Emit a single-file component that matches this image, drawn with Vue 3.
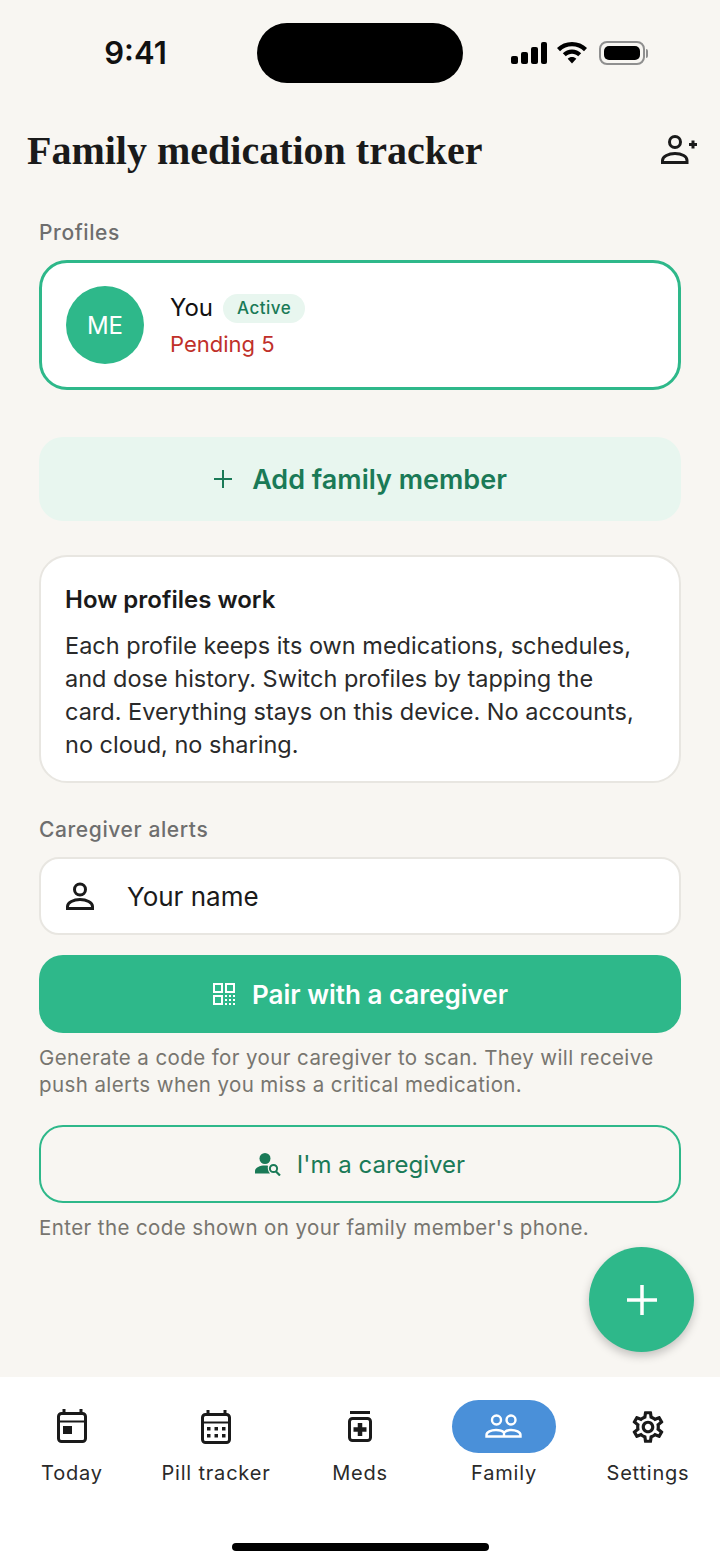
<template>
  <div class="screen">
    <div class="status-bar">
      <span class="time">9:41</span>
      <div class="island"></div>
      <div class="status-icons">
        <svg width="38" height="24" viewBox="0 0 38 24">
          <rect x="1" y="15" width="7" height="8" rx="2" />
          <rect x="11" y="11" width="7" height="12" rx="2" />
          <rect x="21" y="6" width="7" height="17" rx="2" />
          <rect x="31" y="1" width="6" height="22" rx="2" />
        </svg>
        <svg width="32" height="24" viewBox="0 0 32 24">
          <path d="M16 1C10 1 5 3.200 1 7l3 3.200C7.300 7 11.400 5.300 16 5.300S24.700 7 28 10.200L31 7C27 3.200 22 1 16 1z" />
          <path d="M16 8.500c-3.600 0-6.800 1.400-9.200 3.700l3 3.100c1.600-1.500 3.800-2.500 6.200-2.500s4.600 1 6.200 2.500l3-3.100C22.800 9.900 19.600 8.500 16 8.500z" />
          <path d="M16 16c-1.700 0-3.200.7-4.300 1.700L16 22.500l4.300-4.800C19.200 16.700 17.700 16 16 16z" />
        </svg>
        <div class="battery"><span class="battery-fill"></span></div>
        <span class="battery-cap"></span>
      </div>
    </div>

    <header class="page-header">
      <h1>Family medication tracker</h1>
      <svg class="add-person" width="38" height="32" viewBox="0 0 38 32" fill="none" stroke="#1a1a1a" stroke-width="3">
        <circle cx="15" cy="8" r="5.500" />
        <path d="M2.500 28.500v-2c0-4 6-7 12.500-7 3.500 0 6.500.8 8.700 2 2.200 1.200 3.300 3 3.300 5v2z" />
        <path d="M29 10.500h8M33 6.500v8" />
      </svg>
    </header>

    <main class="content">
      <div class="section-label">Profiles</div>
      <div class="profile-card">
        <div class="avatar">ME</div>
        <div class="profile-info">
          <div class="name-row">
            <span class="profile-name">You</span>
            <span class="active-badge">Active</span>
          </div>
          <div class="pending">Pending 5</div>
        </div>
      </div>

      <button class="add-member">
        <svg width="20" height="20" viewBox="0 0 20 20" fill="none" stroke="#1a7a57" stroke-width="2">
          <path d="M1 10h18M10 1v18" />
        </svg>
        <span>Add family member</span>
      </button>

      <div class="info-card">
        <h2>How profiles work</h2>
        <p>Each profile keeps its own medications, schedules, and dose history. Switch profiles by tapping the card. Everything stays on this device. No accounts, no cloud, no sharing.</p>
      </div>

      <div class="section-label alerts-label">Caregiver alerts</div>
      <div class="name-input">
        <svg width="30" height="30" viewBox="0 0 30 30" fill="none" stroke="#1a1a1a" stroke-width="3">
          <circle cx="15" cy="8.500" r="5.500" />
          <path d="M2.500 27.500v-2c0-4 6-7 12.500-7s12.500 3 12.500 7v2z" />
        </svg>
        <span>Your name</span>
      </div>

      <button class="pair-btn">
        <svg width="24" height="24" viewBox="0 0 24 24" fill="none" stroke="#fff" stroke-width="2">
          <rect x="2" y="2" width="8" height="8" />
          <rect x="14" y="2" width="8" height="8" />
          <rect x="2" y="14" width="8" height="8" />
          <path stroke-width="2" stroke-dasharray="2 2" d="M13 14h10M13 18h10M13 22h10" />
        </svg>
        <span>Pair with a caregiver</span>
      </button>
      <p class="helper">Generate a code for your caregiver to scan. They will receive push alerts when you miss a critical medication.</p>

      <button class="caregiver-btn">
        <svg width="26" height="24" viewBox="0 0 26 24" fill="#1a7a57">
          <circle cx="10" cy="6.500" r="5.500" />
          <path d="M0 21.500v-2.500c0-3.500 5-5.500 10-5.500 1 0 2 .1 3 .3-.6 2.600 0 5.600 2 7.700z" />
          <circle cx="18.500" cy="16.500" r="3.600" fill="none" stroke="#1a7a57" stroke-width="2" />
          <path d="M21 19.500l4 4" fill="none" stroke="#1a7a57" stroke-width="2.200" />
        </svg>
        <span>I'm a caregiver</span>
      </button>
      <p class="helper caregiver-helper">Enter the code shown on your family member's phone.</p>
    </main>

    <button class="fab" aria-label="Add">
      <svg width="34" height="34" viewBox="0 0 34 34" fill="none" stroke="#fff" stroke-width="3.500">
        <path d="M2 17h30M17 2v30" />
      </svg>
    </button>

    <nav class="bottom-nav">
      <div v-for="tab in tabs" :key="tab.label" class="nav-item">
        <div class="nav-icon" :class="{ selected: tab.active }">
          <svg v-if="tab.label === 'Today'" width="38" height="38" viewBox="0 0 38 38" fill="none" stroke="#1a1a1a" stroke-width="3">
            <rect x="5.500" y="5.500" width="27" height="28" rx="3" />
            <path d="M11 1v5M28 1v5" />
            <path d="M5 13.500h28" stroke-width="2" />
            <rect x="10" y="18" width="9" height="8" fill="#1a1a1a" stroke="none" />
          </svg>
          <svg v-else-if="tab.label === 'Pill tracker'" width="38" height="38" viewBox="0 0 38 38" fill="none" stroke="#1a1a1a" stroke-width="3">
            <rect x="5.500" y="6.500" width="27" height="28" rx="3" />
            <path d="M11 2v5M28 2v5" />
            <path d="M5 14.500h28" stroke-width="2" />
            <g fill="#1a1a1a" stroke="none">
              <rect x="10" y="19" width="3.500" height="3.500" />
              <rect x="17.500" y="19" width="3.500" height="3.500" />
              <rect x="25" y="19" width="3.500" height="3.500" />
              <rect x="10" y="26" width="3.500" height="3.500" />
              <rect x="17.500" y="26" width="3.500" height="3.500" />
              <rect x="25" y="26" width="3.500" height="3.500" />
            </g>
          </svg>
          <svg v-else-if="tab.label === 'Meds'" width="38" height="38" viewBox="0 0 38 38" fill="none" stroke="#1a1a1a" stroke-width="3">
            <path d="M9 4.500h20" />
            <rect x="8.500" y="10.500" width="21" height="22" rx="3" />
            <path d="M19 15v13M12.500 21.500h13" stroke-width="4.500" />
          </svg>
          <svg v-else-if="tab.label === 'Family'" width="38" height="30" viewBox="0 0 38 30" fill="none" stroke="#fff" stroke-width="2.400">
            <circle cx="11.500" cy="8" r="4.500" />
            <circle cx="26" cy="8" r="4.500" />
            <path d="M1.500 24.500v-1.500c0-3 4.500-5 9.500-5 3.500 0 6.500 1 8 2.500 1.500-1.500 4-2.500 7-2.500 5 0 9.500 2 9.500 5v1.500z" />
            <path d="M19 20.500v4" />
          </svg>
          <svg v-else width="38" height="38" viewBox="0 0 24 24" fill="#1a1a1a">
            <path d="M19.430 12.980c.04-.32.070-.64.070-.98 0-.34-.03-.66-.07-.98l2.110-1.650c.19-.15.240-.42.120-.64l-2-3.460c-.09-.16-.26-.25-.44-.25-.06 0-.12.010-.17.030l-2.490 1c-.52-.4-1.080-.73-1.690-.98l-.38-2.650C14.460 2.180 14.250 2 14 2h-4c-.25 0-.46.18-.49.420l-.38 2.650c-.61.25-1.170.59-1.690.98l-2.490-1c-.06-.02-.12-.03-.18-.03-.17 0-.34.09-.43.25l-2 3.460c-.13.22-.07.49.12.64l2.110 1.650c-.04.32-.07.65-.07.98 0 .33.030.66.070.98l-2.110 1.650c-.19.15-.24.42-.12.64l2 3.460c.09.16.26.25.44.25.06 0 .12-.01.17-.03l2.490-1c.52.4 1.080.73 1.690.98l.38 2.650c.03.24.24.42.49.42h4c.25 0 .46-.18.49-.42l.38-2.650c.61-.25 1.170-.59 1.690-.98l2.490 1c.06.02.12.03.18.03.17 0 .34-.09.43-.25l2-3.460c.12-.22.07-.49-.12-.64l-2.110-1.650zm-1.980-1.710c.04.31.050.52.050.73 0 .21-.02.43-.05.73l-.14 1.130.89.7 1.080.84-.7 1.210-1.270-.51-1.040-.42-.9.680c-.43.32-.84.56-1.250.73l-1.060.43-.16 1.130-.2 1.350h-1.400l-.19-1.350-.16-1.130-1.060-.43c-.43-.18-.83-.41-1.230-.71l-.91-.7-1.060.43-1.270.51-.7-1.210 1.080-.84.89-.7-.14-1.130c-.03-.31-.05-.54-.05-.74s.02-.43.05-.73l.14-1.130-.89-.7-1.080-.84.7-1.210 1.270.51 1.040.42.9-.68c.43-.32.84-.56 1.250-.73l1.060-.43.16-1.130.2-1.350h1.390l.19 1.350.16 1.130 1.060.43c.43.18.83.41 1.230.71l.91.7 1.060-.43 1.270-.51.7 1.210-1.070.85-.89.7.14 1.130zM12 8c-2.210 0-4 1.790-4 4s1.790 4 4 4 4-1.790 4-4-1.790-4-4-4zm0 6c-1.100 0-2-.9-2-2s.9-2 2-2 2 .9 2 2-.9 2-2 2z" />
          </svg>
        </div>
        <span class="nav-label">{{ tab.label }}</span>
      </div>
      <div class="home-indicator"></div>
    </nav>
  </div>
</template>

<script setup>
const tabs = [
  { label: 'Today' },
  { label: 'Pill tracker' },
  { label: 'Meds' },
  { label: 'Family', active: true },
  { label: 'Settings' },
];
</script>

<style scoped>
.screen {
  position: relative;
  width: 720px;
  height: 1564px;
  display: flex;
  flex-direction: column;
  overflow: hidden;
  background: #f8f6f2;
  color: #1a1a1a;
  font-family: 'Inter', 'Noto Sans', sans-serif;
}

.status-bar {
  height: 106px;
  flex-shrink: 0;
  display: flex;
  align-items: flex-start;
  padding-top: 23px;
  box-sizing: border-box;
}

.time {
  width: 271px;
  text-align: center;
  font-size: 31px;
  line-height: 60px;
  font-weight: 600;
  color: #111;
  font-family: 'Inter', sans-serif;
}

.island {
  width: 206px;
  height: 60px;
  margin-left: -14px;
  border-radius: 30px;
  background: #000;
}

.status-icons {
  display: flex;
  align-items: center;
  height: 60px;
  margin-left: 47px;
  gap: 8px;
}

.status-icons svg {
  fill: #000;
}

.battery {
  width: 46px;
  height: 24px;
  margin-left: 3px;
  padding: 3px;
  box-sizing: border-box;
  border: 2px solid #8f8f8f;
  border-radius: 8px;
  display: flex;
}

.battery-fill {
  flex: 1;
  background: #000;
  border-radius: 5px;
}

.battery-cap {
  width: 2px;
  height: 9px;
  margin-left: -7px;
  background: #8f8f8f;
  border-radius: 0 2px 2px 0;
}

.page-header {
  height: 88px;
  flex-shrink: 0;
  display: flex;
  align-items: center;
  justify-content: space-between;
  padding: 0 22px 0 27px;
}

.page-header h1 {
  margin: 0;
  font-family: 'Liberation Serif', serif;
  font-size: 40px;
  font-weight: 700;
  color: #1a1a1a;
}

.content {
  display: flex;
  flex-direction: column;
  padding: 26px 39px 0;
}

.section-label {
  font-size: 21px;
  line-height: 26px;
  letter-spacing: 0.6px;
  color: #6e6e6e;
  font-weight: 500;
}

.profile-card {
  height: 130px;
  margin-top: 14px;
  box-sizing: border-box;
  display: flex;
  align-items: center;
  gap: 26px;
  padding: 0 24px;
  background: #fff;
  border: 3px solid #2eb88a;
  border-radius: 28px;
}

.avatar {
  width: 78px;
  height: 78px;
  border-radius: 50%;
  background: #2eb88a;
  color: #fff;
  font-size: 24px;
  display: flex;
  align-items: center;
  justify-content: center;
}

.profile-info {
  display: flex;
  flex-direction: column;
  gap: 8px;
}

.name-row {
  display: flex;
  align-items: center;
  gap: 10px;
}

.profile-name {
  font-size: 24px;
  line-height: 30px;
  color: #111;
}

.active-badge {
  height: 29px;
  line-height: 29px;
  padding: 0 14px;
  border-radius: 15px;
  background: #e8f6ef;
  color: #1a7a57;
  font-size: 17px;
  font-weight: 500;
  letter-spacing: 0.5px;
}

.pending {
  font-size: 22px;
  line-height: 26px;
  color: #c0302a;
}

.add-member {
  height: 84px;
  margin-top: 47px;
  display: flex;
  align-items: center;
  justify-content: center;
  gap: 19px;
  border: none;
  border-radius: 24px;
  background: #e8f6ef;
  color: #1a7a57;
  font-family: inherit;
  font-size: 27px;
  font-weight: 600;
}

.info-card {
  height: 228px;
  margin-top: 34px;
  padding: 28px 24px 0;
  box-sizing: border-box;
  background: #fff;
  border: 2px solid #e8e6e1;
  border-radius: 28px;
}

.info-card h2 {
  margin: 0;
  font-size: 24px;
  line-height: 30px;
  font-weight: 600;
  color: #1a1a1a;
}

.info-card p {
  margin: 14px 0 0;
  font-size: 23.500px;
  line-height: 33px;
  color: #2a2a2a;
}

.alerts-label {
  margin-top: 34px;
}

.name-input {
  height: 78px;
  margin-top: 14px;
  padding: 0 24px;
  box-sizing: border-box;
  display: flex;
  align-items: center;
  gap: 32px;
  background: #fff;
  border: 2px solid #e8e6e1;
  border-radius: 20px;
  font-size: 26px;
  color: #1a1a1a;
}

.pair-btn {
  height: 78px;
  margin-top: 20px;
  display: flex;
  align-items: center;
  justify-content: center;
  gap: 16px;
  border: none;
  border-radius: 24px;
  background: #2eb88a;
  color: #fff;
  font-family: inherit;
  font-size: 26px;
  font-weight: 600;
}

.helper {
  margin: 11px 0 0;
  font-size: 20.500px;
  line-height: 27px;
  letter-spacing: 0.4px;
  color: #77756f;
}

.caregiver-btn {
  height: 78px;
  margin-top: 27px;
  display: flex;
  align-items: center;
  justify-content: center;
  gap: 16px;
  background: transparent;
  border: 2px solid #2eb88a;
  border-radius: 24px;
  color: #1a7a57;
  font-family: inherit;
  font-size: 24px;
}

.caregiver-helper {
  margin-top: 11px;
}

.fab {
  position: absolute;
  left: 589px;
  top: 1247px;
  width: 105px;
  height: 105px;
  display: flex;
  align-items: center;
  justify-content: center;
  border: none;
  border-radius: 50%;
  background: #2eb88a;
  box-shadow: 0 4px 10px rgba(0, 0, 0, 0.22);
}

.bottom-nav {
  position: relative;
  margin-top: auto;
  height: 187px;
  flex-shrink: 0;
  display: flex;
  background: #fff;
  padding-top: 23px;
  box-sizing: border-box;
}

.nav-item {
  width: 144px;
  display: flex;
  flex-direction: column;
  align-items: center;
}

.nav-icon {
  width: 104px;
  height: 53px;
  display: flex;
  align-items: center;
  justify-content: center;
  border-radius: 27px;
}

.nav-icon.selected {
  background: #4a90d9;
}

.nav-label {
  margin-top: 7px;
  font-size: 20px;
  line-height: 26px;
  letter-spacing: 0.8px;
  color: #2a2a2a;
}

.home-indicator {
  position: absolute;
  left: 232px;
  bottom: 13px;
  width: 257px;
  height: 8px;
  border-radius: 4px;
  background: #000;
}
</style>
